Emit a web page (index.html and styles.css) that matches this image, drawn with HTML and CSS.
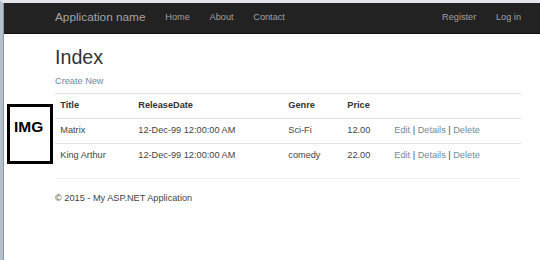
FILE: index.html
```html
<!DOCTYPE html>
<html>
<head>
<meta name="viewport" content="width=device-width, initial-scale=1">
<link rel="stylesheet" href="styles.css">
</head>
<body>

<div class="frame">
  <div class="page">

    <div class="navbar">
      <div class="container nav-inner">
        <a class="brand">Application name</a>
        <ul class="nav">
          <li><a>Home</a></li>
          <li><a>About</a></li>
          <li><a>Contact</a></li>
        </ul>
        <ul class="nav nav-right">
          <li><a>Register</a></li>
          <li><a>Log in</a></li>
        </ul>
      </div>
    </div>

    <div class="container body-content">
      <h2>Index</h2>
      <p class="actions"><a class="link">Create New</a></p>

      <table class="table">
        <colgroup>
          <col class="col-title">
          <col class="col-date">
          <col class="col-genre">
          <col class="col-price">
          <col>
        </colgroup>
        <tr>
          <th>Title</th>
          <th>ReleaseDate</th>
          <th>Genre</th>
          <th>Price</th>
          <th></th>
        </tr>
        <tr>
          <td>Matrix</td>
          <td>12-Dec-99 12:00:00 AM</td>
          <td>Sci-Fi</td>
          <td>12.00</td>
          <td><a class="link">Edit</a> | <a class="link">Details</a> | <a class="link">Delete</a></td>
        </tr>
        <tr>
          <td>King Arthur</td>
          <td>12-Dec-99 12:00:00 AM</td>
          <td>comedy</td>
          <td>22.00</td>
          <td><a class="link">Edit</a> | <a class="link">Details</a> | <a class="link">Delete</a></td>
        </tr>
      </table>

      <hr>
      <footer>
        <p>&copy; 2015 - My ASP.NET Application</p>
      </footer>
    </div>

    <div class="img-box">IMG</div>

  </div>
</div>

</body>
</html>
```

FILE: styles.css
```css
body {
  margin: 0;
  font-family: "Liberation Sans", Arial, sans-serif;
  font-size: 9.2px;
  line-height: 13.1px;
  color: #444;
  background-color: #fff;
}

.frame {
  border-left: 3px solid #b4c1cd;
  border-top: 3px solid #e2e6ea;
  min-height: 257px;
}

.page {
  position: relative;
  border-left: 1px solid #8c959d;
  min-height: 257px;
}

.container {
  padding: 0 19px 0 51px;
}

.navbar {
  background-color: #222;
  border-bottom: 1px solid #111;
  height: 30px;
}

.nav-inner {
  display: flex;
  align-items: center;
  height: 30px;
}

.brand {
  color: #a4a4a4;
  font-size: 11.8px;
  padding-right: 10px;
}

.nav {
  display: flex;
  list-style: none;
  margin: 0;
  padding: 0;
}

.nav a {
  display: block;
  color: #a0a0a0;
  font-size: 9.2px;
  padding: 0 9.85px;
}

.nav-right {
  margin-left: auto;
  margin-right: -9.85px;
}

h2 {
  font-size: 19.7px;
  font-weight: normal;
  line-height: 21.7px;
  color: #333;
  margin: 13px 0 6.6px;
}

p {
  margin: 0 0 6.6px;
}

.actions {
  margin-bottom: 4.8px;
}

.link {
  color: #6b8ba3;
}

.table {
  width: 100%;
  border-collapse: collapse;
  table-layout: fixed;
  margin-bottom: 11px;
}

.col-title { width: 78px; }
.col-date { width: 150px; }
.col-genre { width: 59px; }
.col-price { width: 47px; }

.table th,
.table td {
  text-align: left;
  padding: 5.3px;
  border-top: 1px solid #e2e2e2;
  white-space: nowrap;
}

.table th {
  color: #333;
  font-weight: bold;
}

hr {
  border: 0;
  border-top: 1px solid #eee;
  margin: 11px 0 13px;
}

footer p {
  color: #444;
}

.img-box {
  position: absolute;
  left: 3px;
  top: 101px;
  width: 46px;
  height: 60px;
  box-sizing: border-box;
  border: 3px solid #000;
  background-color: #fff;
  padding: 11.4px 0 0 4px;
  font-size: 15.5px;
  font-weight: bold;
  line-height: 18px;
  color: #000;
}
```
